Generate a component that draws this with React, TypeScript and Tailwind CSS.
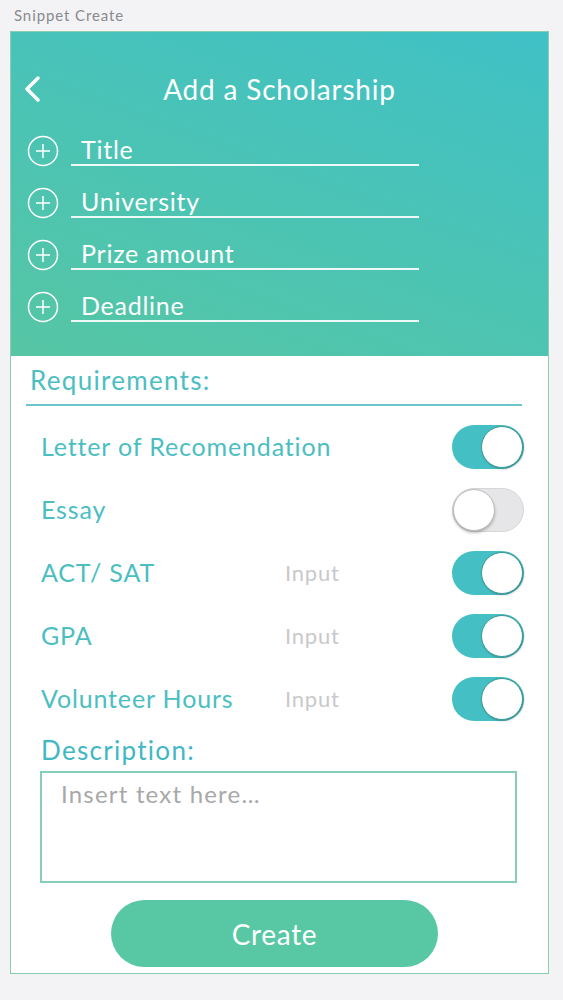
import { useState } from "react";

// header fields with plus icon
const fields = ["Title", "University", "Prize amount", "Deadline"];

type Req = { label: string; input?: boolean; on: boolean };

const reqs: Req[] = [
  { label: "Letter of Recomendation", on: true },
  { label: "Essay", on: false },
  { label: "ACT/ SAT", input: true, on: true },
  { label: "GPA", input: true, on: true },
  { label: "Volunteer Hours", input: true, on: true },
];

function PlusCircle() {
  return (
    <svg width="32" height="32" viewBox="0 0 32 32" fill="none" stroke="white" strokeWidth="1.5">
      <circle cx="16" cy="16" r="14.5" />
      <path d="M16 9v14M9 16h14" />
    </svg>
  );
}

function Toggle({ on, onClick }: { on: boolean; onClick: () => void }) {
  return (
    <button
      onClick={onClick}
      className={
        on
          ? "flex h-[44px] w-[72px] shrink-0 items-center justify-end rounded-full bg-[#44bfc3] p-[1px]"
          : "flex h-[44px] w-[72px] shrink-0 items-center justify-start rounded-full border border-[#d6d6d8] bg-[#e6e6e8]"
      }
    >
      <span
        className={
          on
            ? "h-[42px] w-[42px] rounded-full border border-[#3a9a98] bg-white shadow-[1px_1px_2px_rgba(0,0,0,0.25)]"
            : "h-[42px] w-[42px] rounded-full border border-[#bdbdbd] bg-white shadow-[0_2px_3px_rgba(0,0,0,0.25)]"
        }
      />
    </button>
  );
}

export default function App() {
  const [toggles, setToggles] = useState(reqs.map((r) => r.on));

  return (
    <div className="min-h-screen w-[563px] bg-[#f3f3f5] pt-[5px] font-['Lato',sans-serif]">
      <div className="h-[26px] pl-[14px] text-[15px] leading-[20px] tracking-[0.9px] text-[#8a8a8c]">Snippet Create</div>

      <div className="ml-[10px] h-[943px] w-[539px] border border-[#8ccdb0] bg-white">
        {/* Header */}
        <div className="h-[324px] bg-[linear-gradient(200deg,#40c1c6,#56c6a4)] pt-[37px]">
          <div className="flex h-[40px] items-center">
            <div className="flex w-[40px] justify-end pr-[8px]">
              <svg width="20" height="28" viewBox="0 0 20 28" fill="none" stroke="white" strokeWidth="3.5" strokeLinecap="round" strokeLinejoin="round">
                <path d="M15 3L4 14l11 11" />
              </svg>
            </div>
            <div className="flex-1 text-center text-[28px] tracking-[0.8px] text-white">Add a Scholarship</div>
            <div className="w-[40px]" />
          </div>

          <div className="mt-[16px] pl-[16px]">
            {fields.map((f) => (
              <div key={f} className="flex h-[52px] items-center">
                <PlusCircle />
                <div className="ml-[12px] flex h-[30px] w-[348px] items-center border-b-2 border-white/90 pl-[10px] text-[25px] tracking-[0.75px] text-white">
                  {f}
                </div>
              </div>
            ))}
          </div>
        </div>

        {/* Requirements */}
        <div className="ml-[15px] mr-[26px] flex h-[50px] items-center border-b-2 border-[#6cc5c8] pl-[4px] text-[26px] tracking-[1.3px] text-[#4cbec3]">
          Requirements:
        </div>

        <div className="mt-[9px]">
          {reqs.map((r, i) => (
            <div key={r.label} className="flex h-[63px] items-center pl-[30px] pr-[24px]">
              <div className="w-[244px] shrink-0 whitespace-nowrap text-[25px] tracking-[0.85px] text-[#4bbec2]">{r.label}</div>
              <div className="flex-1 text-[22px] tracking-[0.8px] text-[#c9c9cb]">{r.input ? "Input" : ""}</div>
              <Toggle
                on={toggles[i]}
                onClick={() => setToggles(toggles.map((t, j) => (j === i ? !t : t)))}
              />
            </div>
          ))}
        </div>

        {/* Description */}
        <div className="flex h-[41px] items-center pl-[30px] text-[26px] tracking-[1.3px] text-[#3fb8c4]">Description:</div>
        <div className="ml-[29px] h-[112px] w-[477px] border-2 border-[#86cfb4] pl-[19px] pt-[7px] text-[24px] leading-[28px] tracking-[1.2px] text-[#a8a8aa]">
          Insert text here…
        </div>

        <button className="ml-[100px] mt-[17px] flex h-[67px] w-[327px] items-center justify-center rounded-full bg-[#58c7a3] text-[28px] tracking-[0.7px] text-white">
          Create
        </button>
      </div>
    </div>
  );
}
